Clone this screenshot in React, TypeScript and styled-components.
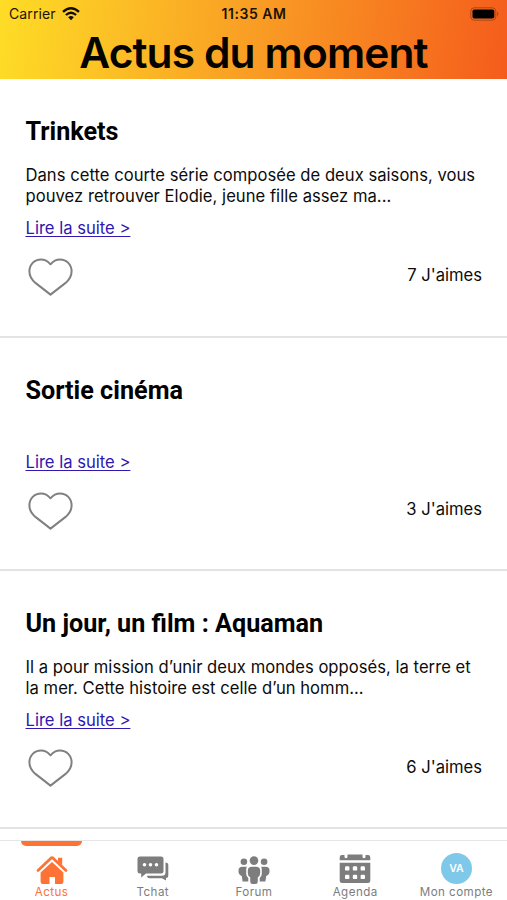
import React from "react";
import styled, { createGlobalStyle } from "styled-components";

const GlobalStyle = createGlobalStyle`
  * { box-sizing: border-box; }
  body { margin: 0; background: #fff; }
`;

const Screen = styled.div`
  width: 507px;
  height: 900px;
  display: flex;
  flex-direction: column;
  overflow: hidden;
  background: #fff;
  color: #0c0c0c;
  font-family: Inter, "Liberation Sans", sans-serif;
`;

const Header = styled.header`
  flex: 0 0 79px;
  background: linear-gradient(97deg, #fedd26 0%, #f99d24 50%, #f55c1c 100%);
`;

const StatusBar = styled.div`
  height: 28px;
  display: grid;
  grid-template-columns: 1fr auto 1fr;
  align-items: center;
  padding: 0 8px 0 9px;
  font-size: 14px;
  line-height: 28px;
  color: #1c1304;
`;

const Carrier = styled.div`
  display: flex;
  align-items: center;
  gap: 6px;
  letter-spacing: 0.1px;
`;

const Clock = styled.div`
  font-weight: 600;
  font-size: 14px;
  letter-spacing: 0.55px;
`;

const BatterySlot = styled.div`
  display: flex;
  justify-content: flex-end;
  margin-right: -1px;
`;

const PageTitle = styled.h1`
  margin: 0;
  height: 51px;
  text-align: center;
  font-size: 42.5px;
  line-height: 49px;
  font-weight: 600;
  letter-spacing: -0.9px;
  color: #050300;
`;

const Feed = styled.main`
  flex: 1;
  min-height: 0;
  overflow: hidden;
`;

const Card = styled.article`
  padding: 36px 25px 39px 25.5px;
  border-bottom: 2px solid #e3e3e3;

  &:first-child,
  &:last-child {
    padding-bottom: 40px;
  }
`;

const CardTitle = styled.h2`
  margin: 0 0 17px;
  font: 700 25.2px/33px Roboto, sans-serif;
  color: #000;
`;

const Excerpt = styled.p`
  margin: 0;
  min-height: 17.5px;
  font-size: 16.6px;
  line-height: 21px;
  letter-spacing: 0.03px;
  white-space: pre;
`;

const ReadMore = styled.a`
  display: block;
  width: max-content;
  margin-top: 11px;
  font-size: 16.6px;
  line-height: 21px;
  color: #3018b0;
  text-decoration: underline;
  text-decoration-thickness: 1px;
  text-underline-offset: 2px;
`;

const Reactions = styled.div`
  display: flex;
  align-items: center;
  justify-content: space-between;
  height: 38px;
  margin-top: 18.5px;
  padding-left: 2.5px;
`;

const Likes = styled.span`
  padding-bottom: 2px;
  font-size: 16.6px;
  line-height: 21px;
`;

const TabBar = styled.nav`
  flex: 0 0 60px;
  display: grid;
  grid-template-columns: repeat(5, 1fr);
  padding-left: 1px;
  border-top: 1px solid #e6e6e6;
`;

const Tab = styled.div<{ $active?: boolean }>`
  display: flex;
  flex-direction: column;
  align-items: center;
  color: ${(p) => (p.$active ? "#fd7336" : "#7d7d7d")};
`;

const Indicator = styled.div<{ $active?: boolean }>`
  width: 61px;
  height: 5px;
  border-radius: 0 0 5px 5px;
  background: ${(p) => (p.$active ? "#fd7336" : "transparent")};
`;

const IconSlot = styled.div`
  height: 38px;
  padding-top: 7px;
`;

const TabLabel = styled.span`
  font-size: 11.6px;
  line-height: 16px;
  letter-spacing: 0.45px;
`;

const Avatar = styled.div`
  width: 31px;
  height: 31px;
  border-radius: 50%;
  background: #7ec8ea;
  color: #fff;
  font-size: 10.5px;
  font-weight: 600;
  line-height: 31px;
  text-align: center;
`;

const WifiIcon = () => (
  <svg width="18" height="14" viewBox="0 0 18 14">
    <path d="M1 4.9Q9-2.3 17 4.9" fill="none" stroke="#120c02" strokeWidth="2.3" />
    <path d="M3.9 8Q9 3.5 14.1 8" fill="none" stroke="#120c02" strokeWidth="2.2" />
    <path d="M6.2 10.2Q9 7.9 11.8 10.2L9 13.3Z" fill="#120c02" />
  </svg>
);

const BatteryIcon = () => (
  <svg width="30" height="14" viewBox="0 0 30 14">
    <rect x="0.8" y="0.8" width="25" height="12.4" rx="3.4" fill="none" stroke="#9b4818" strokeWidth="0.9" />
    <rect x="2.5" y="2.5" width="21.8" height="9" rx="1.8" fill="#000" />
    <path d="M27.2 4.8Q29.7 7 27.2 9.2Z" fill="#a34517" />
  </svg>
);

const HeartIcon = () => (
  <svg width="45" height="38" viewBox="0 0 45 38">
    <path
      d="M22.5 6.3C19.8 3.1 16.8 1.5 13 1.5C6.4 1.5 1.4 6.6 1.4 13.3C1.4 18.2 3.6 21.7 7.4 24.9L22.5 36.6L37.6 24.9C41.4 21.7 43.6 18.2 43.6 13.3C43.6 6.6 38.6 1.5 32 1.5C28.2 1.5 25.2 3.1 22.5 6.3Z"
      fill="none"
      stroke="#808080"
      strokeWidth="2"
      strokeLinejoin="round"
    />
  </svg>
);

const HomeIcon = () => (
  <svg width="32" height="31" viewBox="0 0 32 31" fill="currentColor">
    <path d="M2 17.4L14.9 5.2Q16 4.3 17.1 5.2L30 17.4" fill="none" stroke="currentColor" strokeWidth="2.8" strokeLinecap="round" strokeLinejoin="round" />
    <path d="M22 4.8H26.2V12.2L22 8.2Z" />
    <path d="M4.6 19.5L16 9L27.4 19.5V28.8Q27.4 31 25.2 31H19V24H13.5V31H6.8Q4.6 31 4.6 28.8Z" />
  </svg>
);

const ChatIcon = () => (
  <svg width="32" height="31" viewBox="0 0 32 31" fill="currentColor">
    <path d="M3 3.5H24Q26.5 3.5 26.5 6V18Q26.5 20.5 24 20.5H9L4.2 24.6V20.5H3Q0.5 20.5 0.5 18V6Q0.5 3.5 3 3.5Z" />
    <path d="M28.5 9.5Q31.3 9.8 31.3 12V22.8Q31.3 25 29 25.1V27.5L25 25.2H12.5Q10.2 25.2 9.9 22.7H25Q28.5 22.7 28.5 19.2Z" />
    <g fill="#fff"><circle cx="7.5" cy="11.7" r="1.8" /><circle cx="13.5" cy="11.7" r="1.8" /><circle cx="19.5" cy="11.7" r="1.8" /></g>
  </svg>
);

const PeopleIcon = () => (
  <svg width="32" height="31" viewBox="0 0 32 31" fill="currentColor">
    <circle cx="5.9" cy="8.8" r="3.3" />
    <circle cx="26.1" cy="8.8" r="3.3" />
    <circle cx="16" cy="7.6" r="4.3" />
    <path d="M4.5 13.8H8.8Q8.2 15.2 8.2 17V20.5Q8.2 23.6 10.3 25V28.5H4.6L3.8 23Q0.5 21.8 0.5 18.5V17.4Q0.5 13.8 4.5 13.8Z" />
    <path d="M27.5 13.8H23.2Q23.8 15.2 23.8 17V20.5Q23.8 23.6 21.7 25V28.5H27.4L28.2 23Q31.5 21.8 31.5 18.5V17.4Q31.5 13.8 27.5 13.8Z" />
    <path d="M14 13.7H18Q22.2 13.7 22.2 17.8V20Q22.2 23 19.8 24.3V28.5Q19.8 31 17.5 31H14.5Q12.2 31 12.2 28.5V24.3Q9.8 23 9.8 20V17.8Q9.8 13.7 14 13.7Z" />
  </svg>
);

const CalendarIcon = () => (
  <svg width="32" height="31" viewBox="0 0 32 31">
    <path
      d="M3 2H5.5V4.2Q7 6.2 8.5 4.2V1.6H23.5V4.2Q25 6.2 26.5 4.2V2H29Q31.3 2 31.3 4.3V7.2H0.7V4.3Q0.7 2 3 2ZM0.7 9.8H31.3V27.5Q31.3 30 28.8 30H3.2Q0.7 30 0.7 27.5Z"
      fill="currentColor"
    />
    <g fill="#fff">
      {[13.2, 21.7].map((y) =>
        [6, 13.8, 21.6].map((x) => <rect key={`${x}-${y}`} x={x} y={y} width="4.4" height="4.4" rx="1.2" />),
      )}
    </g>
  </svg>
);

const articles = [
  {
    title: "Trinkets",
    text: "Dans cette courte série composée de deux saisons, vous\npouvez retrouver Elodie, jeune fille assez ma...",
    likes: 7,
  },
  { title: "Sortie cinéma", text: "", likes: 3 },
  {
    title: "Un jour, un film : Aquaman",
    text: "Il a pour mission d’unir deux mondes opposés, la terre et\nla mer. Cette histoire est celle d’un homm...",
    likes: 6,
  },
];

const tabs = [
  { label: "Actus", icon: <HomeIcon />, active: true },
  { label: "Tchat", icon: <ChatIcon /> },
  { label: "Forum", icon: <PeopleIcon /> },
  { label: "Agenda", icon: <CalendarIcon /> },
  { label: "Mon compte", icon: <Avatar>VA</Avatar> },
];

export default function App() {
  return (
    <Screen>
      <GlobalStyle />
      <Header>
        <StatusBar>
          <Carrier>Carrier <WifiIcon /></Carrier>
          <Clock>11:35 AM</Clock>
          <BatterySlot><BatteryIcon /></BatterySlot>
        </StatusBar>
        <PageTitle>Actus du moment</PageTitle>
      </Header>
      <Feed>
        {articles.map((a) => (
          <Card key={a.title}>
            <CardTitle>{a.title}</CardTitle>
            <Excerpt>{a.text}</Excerpt>
            <ReadMore>Lire la suite &gt;</ReadMore>
            <Reactions>
              <HeartIcon />
              <Likes>{a.likes} J'aimes</Likes>
            </Reactions>
          </Card>
        ))}
      </Feed>
      <TabBar>
        {tabs.map((t) => (
          <Tab key={t.label} $active={t.active}>
            <Indicator $active={t.active} />
            <IconSlot>{t.icon}</IconSlot>
            <TabLabel>{t.label}</TabLabel>
          </Tab>
        ))}
      </TabBar>
    </Screen>
  );
}
